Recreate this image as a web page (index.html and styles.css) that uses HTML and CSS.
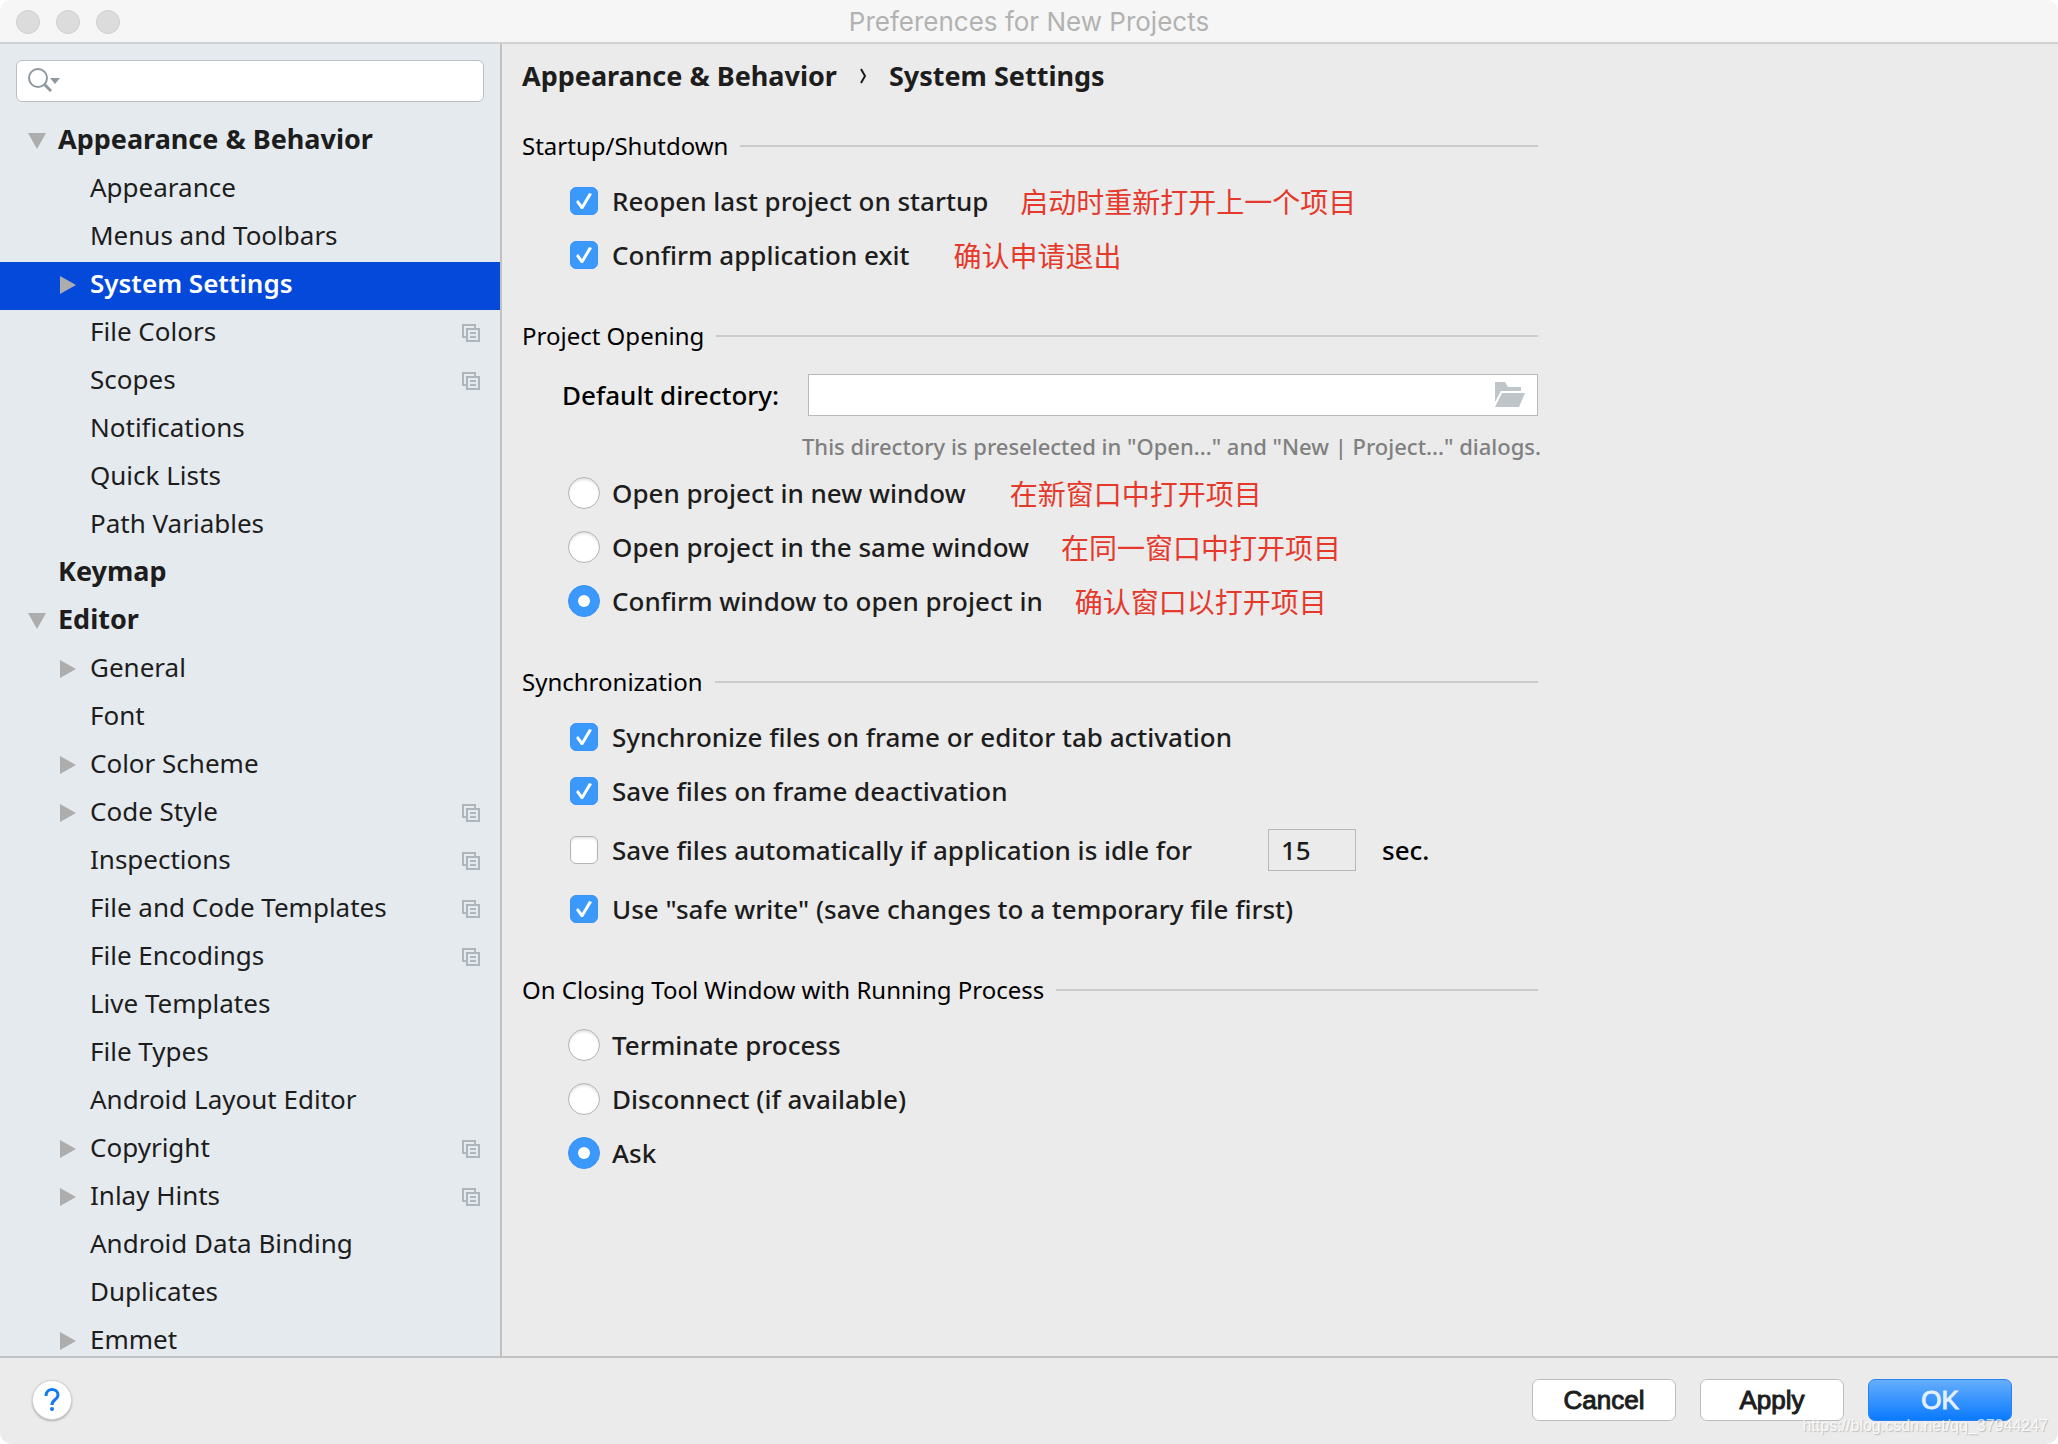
FILE: index.html
```html
<!DOCTYPE html>
<html lang="en">
<head>
<meta charset="utf-8">
<title>Preferences for New Projects</title>
<link rel="stylesheet" href="styles.css">
</head>
<body>
<svg class="defs" width="0" height="0" aria-hidden="true">
  <symbol id="copy" viewBox="0 0 18 18"><path d="M13 4V1H1V13H4" fill="none" stroke="#adb6bd" stroke-width="2"/><path d="M5 5H17V17H5ZM8 9H14M8 13H14" fill="none" stroke="#adb6bd" stroke-width="2"/></symbol>
  <symbol id="right" viewBox="0 0 16 18"><path d="M0 0L16 9L0 18Z" fill="#adadad"/></symbol>
  <symbol id="down" viewBox="0 0 18 16"><path d="M0 0H18L9 16Z" fill="#adadad"/></symbol>
</svg>
<div class="window">
  <header class="titlebar">
    <div class="lights"><i></i><i></i><i></i></div>
    <h1>Preferences for New Projects</h1>
  </header>
  <div class="body">
    <aside class="sidebar">
      <div class="search">
        <svg width="34" height="26" viewBox="0 0 34 26"><circle cx="11" cy="10" r="9" fill="none" stroke="#8f989f" stroke-width="2"/><path d="M17 16L24 23" stroke="#8f989f" stroke-width="3"/><path d="M23 10H33L28 16Z" fill="#8f989f"/></svg>
        <input type="text" aria-label="Search settings">
      </div>
      <ul class="tree">
        <li class="top"><svg class="down"><use href="#down"/></svg><span>Appearance &amp; Behavior</span></li>
        <li><span>Appearance</span></li>
        <li><span>Menus and Toolbars</span></li>
        <li class="selected"><svg class="right"><use href="#right"/></svg><span>System Settings</span></li>
        <li><span>File Colors</span><svg class="copy"><use href="#copy"/></svg></li>
        <li><span>Scopes</span><svg class="copy"><use href="#copy"/></svg></li>
        <li><span>Notifications</span></li>
        <li><span>Quick Lists</span></li>
        <li><span>Path Variables</span></li>
        <li class="top"><span>Keymap</span></li>
        <li class="top"><svg class="down"><use href="#down"/></svg><span>Editor</span></li>
        <li><svg class="right"><use href="#right"/></svg><span>General</span></li>
        <li><span>Font</span></li>
        <li><svg class="right"><use href="#right"/></svg><span>Color Scheme</span></li>
        <li><svg class="right"><use href="#right"/></svg><span>Code Style</span><svg class="copy"><use href="#copy"/></svg></li>
        <li><span>Inspections</span><svg class="copy"><use href="#copy"/></svg></li>
        <li><span>File and Code Templates</span><svg class="copy"><use href="#copy"/></svg></li>
        <li><span>File Encodings</span><svg class="copy"><use href="#copy"/></svg></li>
        <li><span>Live Templates</span></li>
        <li><span>File Types</span></li>
        <li><span>Android Layout Editor</span></li>
        <li><svg class="right"><use href="#right"/></svg><span>Copyright</span><svg class="copy"><use href="#copy"/></svg></li>
        <li><svg class="right"><use href="#right"/></svg><span>Inlay Hints</span><svg class="copy"><use href="#copy"/></svg></li>
        <li><span>Android Data Binding</span></li>
        <li><span>Duplicates</span></li>
        <li><svg class="right"><use href="#right"/></svg><span>Emmet</span></li>
      </ul>
    </aside>
    <main class="content">
      <nav class="crumbs"><span>Appearance &amp; Behavior</span><svg width="8" height="16" viewBox="0 0 8 16"><path d="M2 1L6 8L2 15" fill="none" stroke="#1d1d1d" stroke-width="2"/></svg><span>System Settings</span></nav>

      <section>
        <h2>Startup/Shutdown</h2>
        <div class="row"><label><input type="checkbox" checked>Reopen last project on startup</label><span class="note">启动时重新打开上一个项目</span></div>
        <div class="row"><label><input type="checkbox" checked>Confirm application exit</label><span class="note wide">确认申请退出</span></div>
      </section>

      <section>
        <h2>Project Opening</h2>
        <div class="directory">
          <label for="dir">Default directory:</label>
          <div class="path"><input id="dir" type="text"><svg width="30" height="26" viewBox="0 0 30 26"><path d="M0 0H10L13 5H26V9H6L0 20Z" fill="#c0c5c9"/><path d="M7 11H30L24 25H0Z" fill="#c0c5c9"/></svg></div>
        </div>
        <p class="hint">This directory is preselected in "Open..." and "New | Project..." dialogs.</p>
        <div class="row"><label><input type="radio" name="open">Open project in new window</label><span class="note wide">在新窗口中打开项目</span></div>
        <div class="row"><label><input type="radio" name="open">Open project in the same window</label><span class="note">在同一窗口中打开项目</span></div>
        <div class="row"><label><input type="radio" name="open" checked>Confirm window to open project in</label><span class="note">确认窗口以打开项目</span></div>
      </section>

      <section>
        <h2>Synchronization</h2>
        <div class="row"><label><input type="checkbox" checked>Synchronize files on frame or editor tab activation</label></div>
        <div class="row"><label><input type="checkbox" checked>Save files on frame deactivation</label></div>
        <div class="row tall"><label class="idle"><input type="checkbox">Save files automatically if application is idle for</label><input class="seconds" type="text" value="15" aria-label="Idle seconds"><span class="unit">sec.</span></div>
        <div class="row"><label><input type="checkbox" checked>Use "safe write" (save changes to a temporary file first)</label></div>
      </section>

      <section>
        <h2>On Closing Tool Window with Running Process</h2>
        <div class="row"><label><input type="radio" name="close">Terminate process</label></div>
        <div class="row"><label><input type="radio" name="close">Disconnect (if available)</label></div>
        <div class="row"><label><input type="radio" name="close" checked>Ask</label></div>
      </section>
    </main>
  </div>
  <footer class="footer">
    <button class="help" type="button" aria-label="Help"><svg width="16" height="24" viewBox="0 0 16 24"><path d="M2 8C2 -1 14 0 14 7C14 12 8 11 8 17" fill="none" stroke="#1479f0" stroke-width="3"/><circle cx="8" cy="21" r="2" fill="#1479f0"/></svg></button>
    <button type="button">Cancel</button>
    <button type="button">Apply</button>
    <button class="primary" type="button">OK</button>
    <span class="watermark">https://blog.csdn.net/qq_37944247</span>
  </footer>
</div>
</body>
</html>
```
FILE: styles.css
```css
* { box-sizing: border-box; }

body {
  margin: 0;
  background: #fff;
  color: #1d1d1d;
  font: 26px/48px "Noto Sans", "Noto Sans CJK SC", sans-serif;
}

h1, h2, p, ul { margin: 0; padding: 0; font-weight: 400; }
input, button { font: inherit; color: inherit; margin: 0; }
svg { flex: none; }
.defs { position: absolute; }

.window {
  display: flex;
  flex-direction: column;
  height: 100vh;
  overflow: hidden;
  border-radius: 12px;
  background: #ebebeb;
}

/* Title bar */
.titlebar {
  display: grid;
  grid-template-columns: 1fr auto 1fr;
  align-items: center;
  height: 44px;
  padding: 2px 16px 0;
  border-bottom: 2px solid #d1d1d1;
  background: #f6f6f6;
}
.titlebar h1 {
  color: #b2b2b2;
  font: 26px/40px Inter, sans-serif;
}
.lights { display: flex; gap: 16px; }
.lights i {
  width: 24px;
  height: 24px;
  border: 1px solid #cfcfcf;
  border-radius: 50%;
  background: #dcdcdc;
}

.body { display: flex; flex: 1; min-height: 0; }

/* Settings tree */
.sidebar {
  flex: none;
  width: 502px;
  overflow: hidden;
  border-right: 2px solid #c1c1c1;
  background: #e5eaee;
}
.search {
  display: flex;
  align-items: center;
  height: 42px;
  margin: 16px;
  padding: 0 10px;
  border: 1px solid #bcbfc2;
  border-radius: 6px;
  background: #fff;
}
.search input {
  flex: 1;
  min-width: 0;
  height: 38px;
  border: 0;
  background: none;
  outline: none;
}
.tree { list-style: none; line-height: 30px; }
.tree li {
  display: grid;
  grid-template-columns: 30px 1fr 18px;
  align-items: center;
  height: 48px;
  padding: 0 20px 2px 60px;
}
.tree .top { padding-left: 28px; font-size: 27px; font-weight: 700; }
.tree span { grid-column: 2; grid-row: 1; padding-bottom: 4px; white-space: nowrap; }
.selected { background: #0549da; color: #fff; font-weight: 600; }
.right { width: 16px; height: 18px; }
.down { width: 18px; height: 16px; }
.copy { width: 18px; height: 18px; grid-column: 3; grid-row: 1; }

/* Settings page */
.content { flex: 1; padding: 8px 20px; font-weight: 500; }
.crumbs {
  display: flex;
  align-items: center;
  gap: 22px;
  margin-bottom: 22px;
  font-size: 27px;
  font-weight: 700;
}
section { max-width: 1016px; margin-bottom: 30px; }
h2 {
  display: flex;
  align-items: center;
  gap: 12px;
  margin-bottom: 4px;
  color: #000;
  font-size: 24px;
}
h2::after { content: ""; flex: 1; height: 2px; background: #cbcbcb; }
.row {
  display: flex;
  align-items: center;
  height: 54px;
  padding-left: 46px;
  white-space: nowrap;
}
.row.tall { height: 64px; }
.row label { display: flex; align-items: center; gap: 12px; }
.note {
  margin-left: 32px;
  color: #e5392b;
  font: 400 28px/40px "Noto Sans CJK SC", sans-serif;
}
.note.wide { margin-left: 44px; }

input[type="checkbox"], input[type="radio"] {
  appearance: none;
  flex: none;
  display: grid;
  place-items: center;
  background: #fff;
  border: 1px solid #b4b4b4;
}
input[type="checkbox"] {
  width: 28px;
  height: 28px;
  margin: 0 2px;
  border-radius: 6px;
  box-shadow: inset 0 2px 2px #e8e8e8;
}
input[type="radio"] {
  width: 32px;
  height: 32px;
  border-radius: 50%;
  box-shadow: inset 0 2px 2px #e2e2e2;
}
input[type="checkbox"]:checked, input[type="radio"]:checked {
  border-color: #3a94f5;
  background: #3b99fc;
  box-shadow: none;
}
input[type="checkbox"]:checked::after {
  content: "";
  width: 20px;
  height: 20px;
  background: #fff;
  clip-path: polygon(2px 11px, 4px 9px, 8px 14px, 15px 2px, 18px 3px, 9px 18px, 7px 18px);
}
input[type="radio"]:checked::after {
  content: "";
  width: 12px;
  height: 12px;
  border-radius: 50%;
  background: #fff;
}

.directory {
  display: flex;
  align-items: center;
  height: 62px;
  padding-left: 40px;
  color: #000;
}
.directory label { width: 246px; }
.path {
  display: flex;
  align-items: center;
  flex: 1;
  height: 42px;
  padding-right: 12px;
  border: 1px solid #b9b9b9;
  background: #fff;
}
.path input {
  flex: 1;
  min-width: 0;
  height: 38px;
  border: 0;
  background: none;
  outline: none;
}
.hint {
  margin-left: 280px;
  color: #808080;
  font-size: 22px;
  font-weight: 500;
  line-height: 40px;
  white-space: nowrap;
}
.idle { width: 700px; }
.seconds {
  width: 88px;
  height: 42px;
  padding: 0 12px;
  border: 1px solid #b9b9b9;
  background: none;
}
.unit { margin-left: 26px; color: #000; }

/* Button bar */
.footer {
  position: relative;
  display: flex;
  align-items: center;
  gap: 24px;
  height: 88px;
  padding: 0 46px 2px 32px;
  border-top: 2px solid #c1c1c1;
}
.footer button {
  width: 144px;
  height: 42px;
  padding: 0;
  border: 1px solid #bdbdbd;
  border-radius: 7px;
  background: #fff;
  font: 26px/38px "Liberation Sans", Arial, sans-serif;
  -webkit-text-stroke: 1px currentColor;
}
.footer .help {
  display: grid;
  place-items: center;
  width: 40px;
  height: 40px;
  margin-right: auto;
  border-radius: 50%;
  border-color: #d4d4d4;
  box-shadow: 0 1px 2px #aaa;
}
.footer .primary {
  border-color: #2a82ef;
  background: linear-gradient(#65aefd, #0a7aff);
  color: #e4f0ff;
}
.watermark {
  position: absolute;
  right: 10px;
  bottom: 8px;
  color: #fff;
  font: 16px/20px "Liberation Sans", Arial, sans-serif;
  opacity: .7;
  text-shadow: 1px 1px 1px #aaa;
}
```
